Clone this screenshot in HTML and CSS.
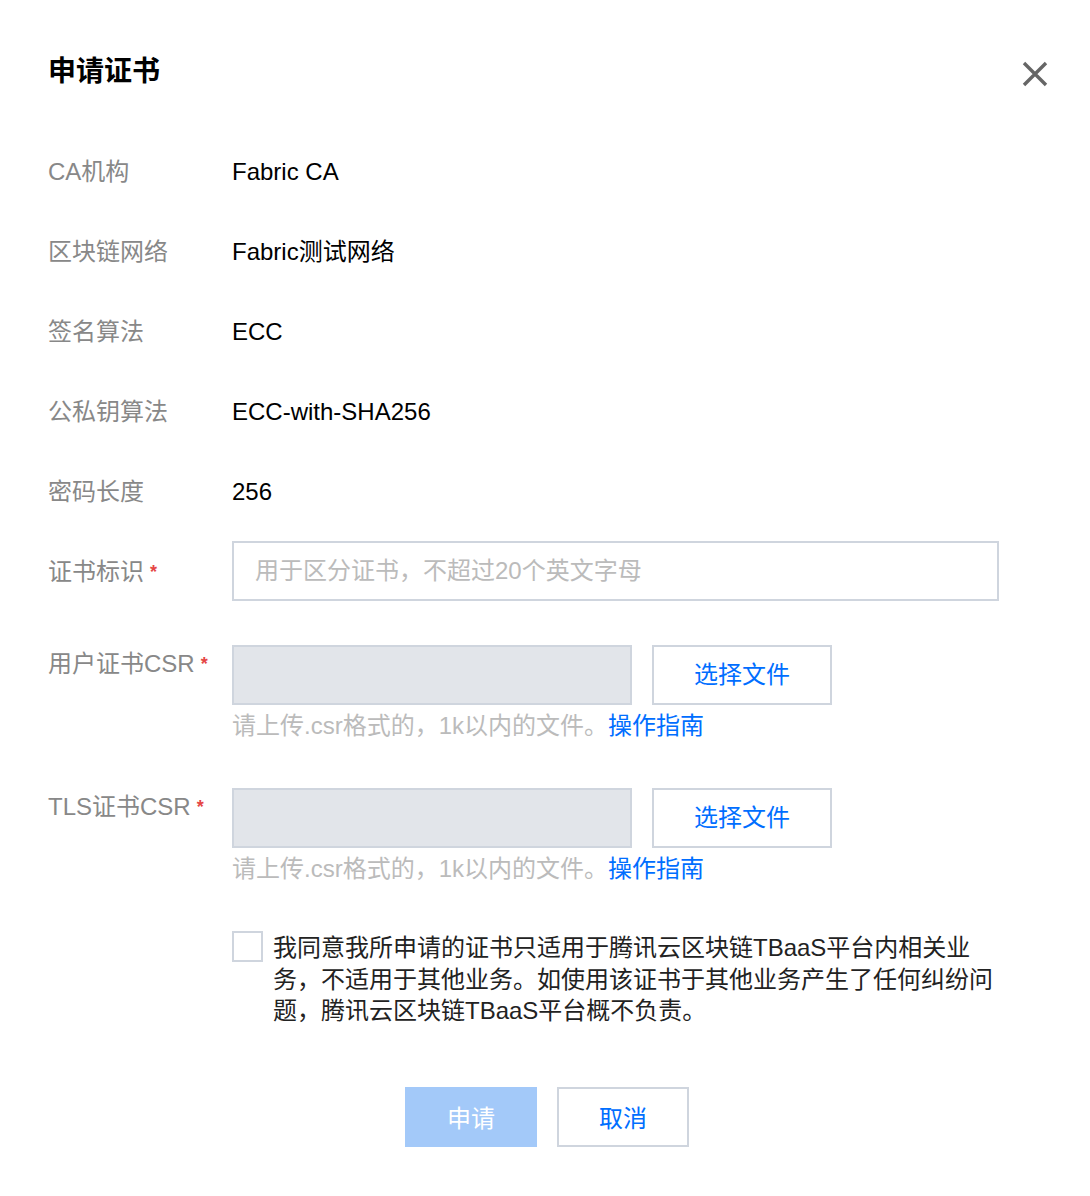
FILE: index.html
```html
<!DOCTYPE html>
<html lang="zh-CN">
<head>
<meta charset="utf-8">
<title>申请证书</title>
<link rel="stylesheet" href="styles.css">
</head>
<body>
<div class="dialog">
  <div class="header">
    <h1 class="title">申请证书</h1>
    <button class="close" aria-label="关闭">
      <svg width="26" height="26" viewBox="0 0 26 26"><path d="M2 2 L24 24 M24 2 L2 24" stroke="#666" stroke-width="3.4" fill="none"/></svg>
    </button>
  </div>
  <div class="form">
    <div class="row info"><div class="label">CA机构</div><div class="value">Fabric CA</div></div>
    <div class="row info"><div class="label">区块链网络</div><div class="value">Fabric测试网络</div></div>
    <div class="row info"><div class="label">签名算法</div><div class="value">ECC</div></div>
    <div class="row info"><div class="label">公私钥算法</div><div class="value">ECC-with-SHA256</div></div>
    <div class="row info"><div class="label">密码长度</div><div class="value">256</div></div>
    <div class="row info"><div class="label">证书标识<span class="star">*</span></div><div class="value"><input class="text-input" type="text" placeholder="用于区分证书，不超过20个英文字母"></div></div>
    <div class="row file">
      <div class="label top">用户证书CSR<span class="star">*</span></div>
      <div class="value">
        <div class="file-line"><div class="file-box"></div><button class="file-btn">选择文件</button></div>
        <div class="help">请上传.csr格式的，1k以内的文件。<a class="link">操作指南</a></div>
      </div>
    </div>
    <div class="row file">
      <div class="label top">TLS证书CSR<span class="star">*</span></div>
      <div class="value">
        <div class="file-line"><div class="file-box"></div><button class="file-btn">选择文件</button></div>
        <div class="help">请上传.csr格式的，1k以内的文件。<a class="link">操作指南</a></div>
      </div>
    </div>
    <div class="row agree">
      <div class="label"></div>
      <div class="value agree-wrap"><span class="checkbox"></span><p class="agree-text">我同意我所申请的证书只适用于腾讯云区块链TBaaS平台内相关业务，不适用于其他业务。如使用该证书于其他业务产生了任何纠纷问题，腾讯云区块链TBaaS平台概不负责。</p></div>
    </div>
  </div>
  <div class="footer">
    <button class="btn primary">申请</button>
    <button class="btn">取消</button>
  </div>
</div>
</body>
</html>
```

FILE: styles.css
```css
* { box-sizing: border-box; }
body {
  margin: 0;
  background: #fff;
  font-family: "Liberation Sans", "Noto Sans CJK SC", sans-serif;
  font-size: 24px;
  color: #000;
}
.dialog {
  width: 1090px;
  min-height: 1196px;
  padding: 52px 0 0 48px;
}
.header {
  display: flex;
  justify-content: space-between;
  align-items: flex-start;
  height: 40px;
}
.title {
  margin: 0;
  font-size: 28px;
  line-height: 40px;
  font-weight: bold;
  color: #000;
}
.close {
  border: 0;
  background: none;
  padding: 0;
  margin: 9px 42px 0 0;
  width: 26px;
  height: 26px;
  cursor: pointer;
}
.close svg { display: block; }
.form {
  margin-top: 40px;
  width: 951px;
}
.row {
  display: flex;
}
.row.info {
  height: 80px;
  align-items: center;
}
.label {
  width: 184px;
  flex: none;
  color: #888;
  line-height: 36px;
  display: flex;
  align-items: center;
}
.label.top {
  padding-top: 1px;
  align-self: flex-start;
}
.star {
  color: #e54545;
  font-size: 18px;
  font-weight: bold;
  margin-left: 6px;
}
.value {
  flex: 1;
  line-height: 36px;
  color: #000;
}
.text-input {
  display: block;
  width: 767px;
  height: 60px;
  margin-top: -2px;
  border: 2px solid #cfd5de;
  padding: 0 21px;
  font: inherit;
  font-size: 24px;
  color: #000;
  outline: none;
}
.text-input::placeholder { color: #bbb; }
.row.file {
  margin-top: 33px;
}
.row.file + .row.file { margin-top: 44px; }
.file-line {
  display: flex;
  gap: 20px;
}
.file-box {
  width: 400px;
  height: 60px;
  background: #e2e5ea;
  border: 2px solid #cfd5de;
}
.file-btn {
  width: 180px;
  height: 60px;
  border: 2px solid #cfd5de;
  background: #fff;
  color: #006eff;
  font: inherit;
  font-size: 24px;
  padding: 0;
}
.help {
  margin-top: 3px;
  color: #bbb;
  line-height: 36px;
}
.link { color: #006eff; }
.row.agree { margin-top: 44px; }
.agree-wrap {
  display: flex;
  align-items: flex-start;
  gap: 10px;
}
.checkbox {
  flex: none;
  width: 31px;
  height: 31px;
  border: 2px solid #cfd5de;
  background: #fff;
}
.agree-text {
  margin: 1px 0 0;
  width: 726px;
  line-height: 31.5px;
  color: #222;
}
.footer {
  display: flex;
  justify-content: center;
  gap: 20px;
  margin-top: 60px;
  padding-right: 44px;
}
.btn {
  width: 132px;
  height: 60px;
  border: 2px solid #cfd5de;
  background: #fff;
  color: #006eff;
  font: inherit;
  font-size: 24px;
  padding: 0;
}
.btn.primary {
  background: #a3c9f9;
  border-color: #a3c9f9;
  color: #fff;
}
```
